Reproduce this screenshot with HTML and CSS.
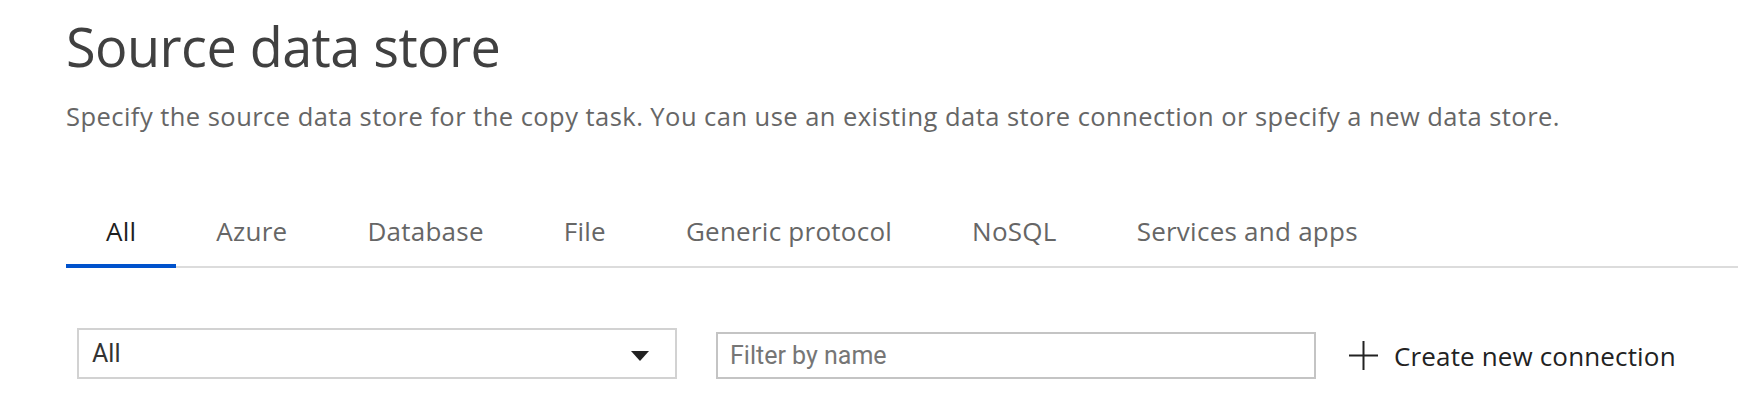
FILE: index.html
```html
<!DOCTYPE html>
<html lang="en">
<head>
<meta charset="utf-8">
<title>Source data store</title>
<link rel="stylesheet" href="styles.css">
</head>
<body>
<div class="page">
  <h1 class="title">Source data store</h1>
  <p class="subtitle">Specify the source data store for the copy task. You can use an existing data store connection or specify a new data store.</p>
  <div class="tabs">
    <div class="tab active">All</div>
    <div class="tab">Azure</div>
    <div class="tab">Database</div>
    <div class="tab">File</div>
    <div class="tab">Generic protocol</div>
    <div class="tab">NoSQL</div>
    <div class="tab">Services and apps</div>
  </div>
  <div class="filters">
    <div class="select">
      <span class="select-value">All</span>
      <span class="caret"></span>
    </div>
    <div class="input"><span class="placeholder">Filter by name</span></div>
    <div class="create">
      <svg class="plus" width="31" height="31" viewBox="0 0 31 31"><path d="M15.5 1V30M1 15.5H30" stroke="#222" stroke-width="2" fill="none"/></svg>
      <span class="create-label">Create new connection</span>
    </div>
  </div>
</div>
</body>
</html>
```
FILE: styles.css
```css
html, body {
  margin: 0;
  padding: 0;
  background: #fff;
}
.page {
  padding: 13px 8px 0 66px;
  font-family: "Open Sans", "Noto Sans", sans-serif;
}
.title {
  margin: 0;
  font-size: 54px;
  line-height: 67px;
  font-weight: 400;
  color: #404040;
  letter-spacing: -0.55px;
}
.subtitle {
  margin: 20px 0 0 0;
  font-size: 25.5px;
  line-height: 32px;
  color: #666;
  letter-spacing: 0.46px;
}
.tabs {
  display: flex;
  margin-top: 83px;
  border-bottom: 2px solid #dcdcdc;
}
.tab {
  padding: 0 40px 17px 40px;
  font-size: 26px;
  line-height: 32px;
  color: #666;
  border-bottom: 4px solid transparent;
  margin-bottom: -2px;
  letter-spacing: 0.25px;
}
.tab.active {
  color: #1e1e1e;
  border-bottom-color: #0052cc;
}
.filters {
  display: flex;
  align-items: flex-end;
  margin-top: 60px;
  padding-left: 11px;
}
.select {
  box-sizing: border-box;
  width: 600px;
  height: 51px;
  border: 2px solid #d2d2d2;
  display: flex;
  align-items: center;
  justify-content: space-between;
  padding: 0 26px 0 13px;
  font-family: Roboto, "Liberation Sans", sans-serif;
  font-size: 25px;
  color: #333;
}
.caret {
  width: 0;
  height: 0;
  border-left: 9.5px solid transparent;
  border-right: 9.5px solid transparent;
  border-top: 10px solid #222;
  margin-top: 4px;
}
.input {
  box-sizing: border-box;
  width: 600px;
  height: 47px;
  margin-left: 39px;
  border: 2px solid #c4c4c4;
  display: flex;
  align-items: center;
  padding: 0 12px;
  font-family: Roboto, "Liberation Sans", sans-serif;
  font-size: 25px;
}
.placeholder {
  color: #767676;
}
.create {
  display: flex;
  align-items: center;
  margin-left: 32px;
  height: 47px;
}
.plus {
  display: block;
}
.create-label {
  margin-left: 15px;
  font-size: 26px;
  color: #222;
  letter-spacing: 0.15px;
}
```
